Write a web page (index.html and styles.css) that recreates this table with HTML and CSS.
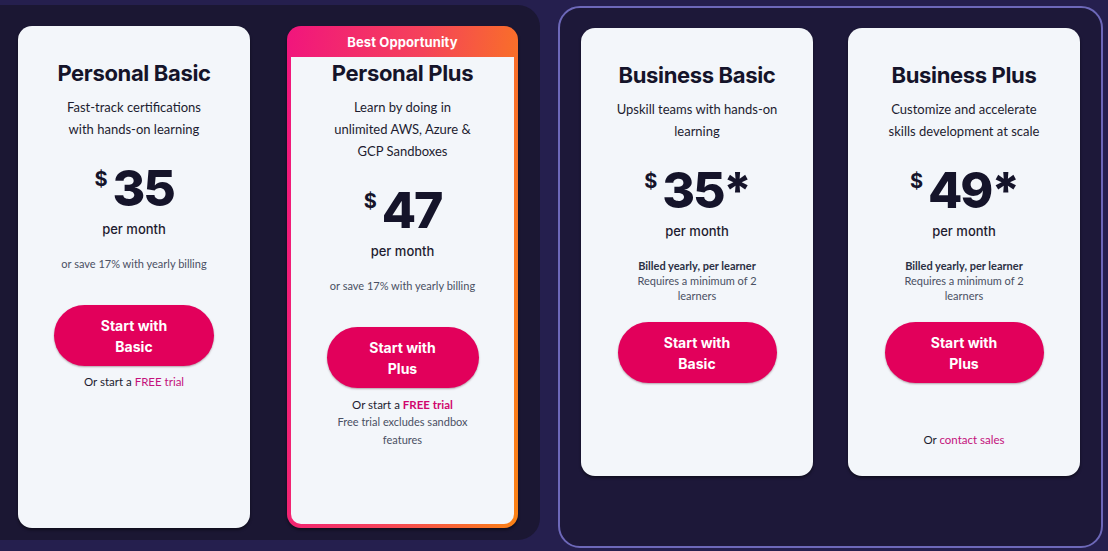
FILE: index.html
```html
<!DOCTYPE html>
<html lang="en">
<head>
<meta charset="utf-8">
<title>Pricing</title>
<link rel="stylesheet" href="styles.css">
</head>
<body>
<main class="page">
  <section class="panel panel-personal">
    <article class="card">
      <h2 class="title">Personal Basic</h2>
      <p class="desc">Fast-track certifications<br>with hands-on learning</p>
      <div class="price"><span class="cur">$</span><span class="amt">35</span></div>
      <p class="per">per month</p>
      <p class="save">or save 17% with yearly billing</p>
      <a class="btn" href="#">Start with<br>Basic</a>
      <p class="trial">Or start a <a href="#" class="link">FREE trial</a></p>
    </article>

    <article class="featured">
      <div class="badge">Best Opportunity</div>
      <div class="card card-inner">
        <h2 class="title">Personal Plus</h2>
        <p class="desc">Learn by doing in<br>unlimited AWS, Azure &amp;<br>GCP Sandboxes</p>
        <div class="price"><span class="cur">$</span><span class="amt">47</span></div>
        <p class="per">per month</p>
        <p class="save">or save 17% with yearly billing</p>
        <a class="btn btn-plus" href="#">Start with<br>Plus</a>
        <p class="trial trial-plus">Or start a <a href="#" class="link strong">FREE trial</a></p>
        <p class="note">Free trial excludes sandbox<br>features</p>
      </div>
    </article>
  </section>

  <section class="panel panel-business">
    <article class="card card-biz">
      <h2 class="title">Business Basic</h2>
      <p class="desc">Upskill teams with hands-on<br>learning</p>
      <div class="price"><span class="cur">$</span><span class="amt">35*</span></div>
      <p class="per">per month</p>
      <p class="billed"><strong>Billed yearly, per learner</strong><br>Requires a minimum of 2<br>learners</p>
      <a class="btn btn-biz" href="#">Start with<br>Basic</a>
    </article>

    <article class="card card-biz">
      <h2 class="title">Business Plus</h2>
      <p class="desc">Customize and accelerate<br>skills development at scale</p>
      <div class="price"><span class="cur">$</span><span class="amt">49*</span></div>
      <p class="per">per month</p>
      <p class="billed"><strong>Billed yearly, per learner</strong><br>Requires a minimum of 2<br>learners</p>
      <a class="btn btn-biz" href="#">Start with<br>Plus</a>
      <p class="trial contact">Or <a href="#" class="link">contact sales</a></p>
    </article>
  </section>
</main>
</body>
</html>
```

FILE: styles.css
```css
* { box-sizing: border-box; }

html, body {
  margin: 0;
  padding: 0;
}

body {
  width: 1108px;
  height: 551px;
  overflow: hidden;
  background: #251f4e;
  font-family: "Inter", "Liberation Sans", sans-serif;
  color: #16152b;
}

.page {
  display: flex;
  align-items: flex-start;
  height: 551px;
}

.panel {
  display: flex;
  align-items: flex-start;
}

.panel-personal {
  width: 540px;
  height: 535px;
  margin-top: 5px;
  background: #1b1733;
  border-radius: 0 22px 22px 0;
  padding: 21px 0 0 18px;
  gap: 37px;
}

.panel-business {
  width: 545px;
  height: 542px;
  margin: 6px 0 0 18px;
  background: #1d1839;
  border: 2px solid #6d68b9;
  border-radius: 22px;
  padding: 20px 0 0 21px;
  gap: 35px;
}

.card {
  width: 232px;
  height: 502px;
  background: #f3f6fa;
  border-radius: 14px;
  box-shadow: 0 2px 3px rgba(0, 0, 0, 0.45);
  padding-top: 33px;
  display: flex;
  flex-direction: column;
  align-items: center;
  text-align: center;
}

.card-biz {
  height: 448px;
}

.featured {
  width: 231px;
  height: 502px;
  border-radius: 14px;
  background: linear-gradient(95deg, #f1157d 0%, #f5425a 50%, #fa8214 100%);
  padding: 0 4px 4px;
  display: flex;
  flex-direction: column;
  box-shadow: 0 2px 3px rgba(0, 0, 0, 0.45);
}

.badge {
  height: 31px;
  line-height: 33px;
  text-align: center;
  color: #fff;
  font-weight: 700;
  font-size: 13px;
  letter-spacing: 0.1px;
}

.card-inner {
  width: auto;
  flex: 1;
  height: auto;
  border-radius: 0 0 10px 10px;
  box-shadow: none;
  padding-top: 2px;
}

.title {
  margin: 0;
  font-size: 22px;
  line-height: 28px;
  font-weight: 700;
  letter-spacing: -0.35px;
  color: #15142a;
}

.desc {
  margin: 9px 0 0;
  font-family: "Lato", "Liberation Sans", sans-serif;
  font-size: 13px;
  line-height: 22px;
  color: #1d1c30;
}

.price {
  margin-top: 22px;
  height: 52px;
  display: flex;
  align-items: center;
  justify-content: center;
  color: #15142a;
}

.cur {
  font-size: 20px;
  font-weight: 700;
  align-self: flex-start;
  margin-top: 5px;
  margin-right: 5px;
}

.amt {
  font-size: 50px;
  font-weight: 800;
  line-height: 52px;
  letter-spacing: -2.2px;
}

.per {
  margin: 6px 0 0;
  font-size: 13px;
  line-height: 18px;
  font-weight: 500;
  color: #1d1c30;
}

.save {
  margin: 18px 0 0;
  font-family: "Lato", "Liberation Sans", sans-serif;
  font-size: 11px;
  line-height: 16px;
  color: #4a5063;
}

.btn {
  margin-top: 33px;
  width: 160px;
  height: 61px;
  border-radius: 31px;
  background: #e2005b;
  color: #fff;
  text-decoration: none;
  font-weight: 700;
  font-size: 14px;
  line-height: 21px;
  padding-top: 9.5px;
  box-shadow: 0 1px 2px rgba(60, 0, 20, 0.35);
}

.btn-plus {
  width: 152px;
}

.btn-biz {
  margin-top: 19px;
  width: 159px;
}

.trial {
  margin: 8px 0 0;
  font-family: "Lato", "Liberation Sans", sans-serif;
  font-size: 11.5px;
  line-height: 16px;
  color: #1d1c30;
}

.trial-plus {
  margin-top: 9px;
}

.link {
  color: #c4117c;
  text-decoration: none;
}

.link.strong {
  font-weight: 700;
  color: #d1066e;
}

.note {
  margin: 0;
  font-family: "Lato", "Liberation Sans", sans-serif;
  font-size: 11px;
  line-height: 18px;
  color: #4a5063;
}

.billed {
  margin: 18px 0 0;
  font-family: "Lato", "Liberation Sans", sans-serif;
  font-size: 11px;
  line-height: 15px;
  color: #4a5063;
}

.billed strong {
  font-weight: 700;
  color: #2b3044;
}

.contact {
  margin-top: 49px;
}
```
